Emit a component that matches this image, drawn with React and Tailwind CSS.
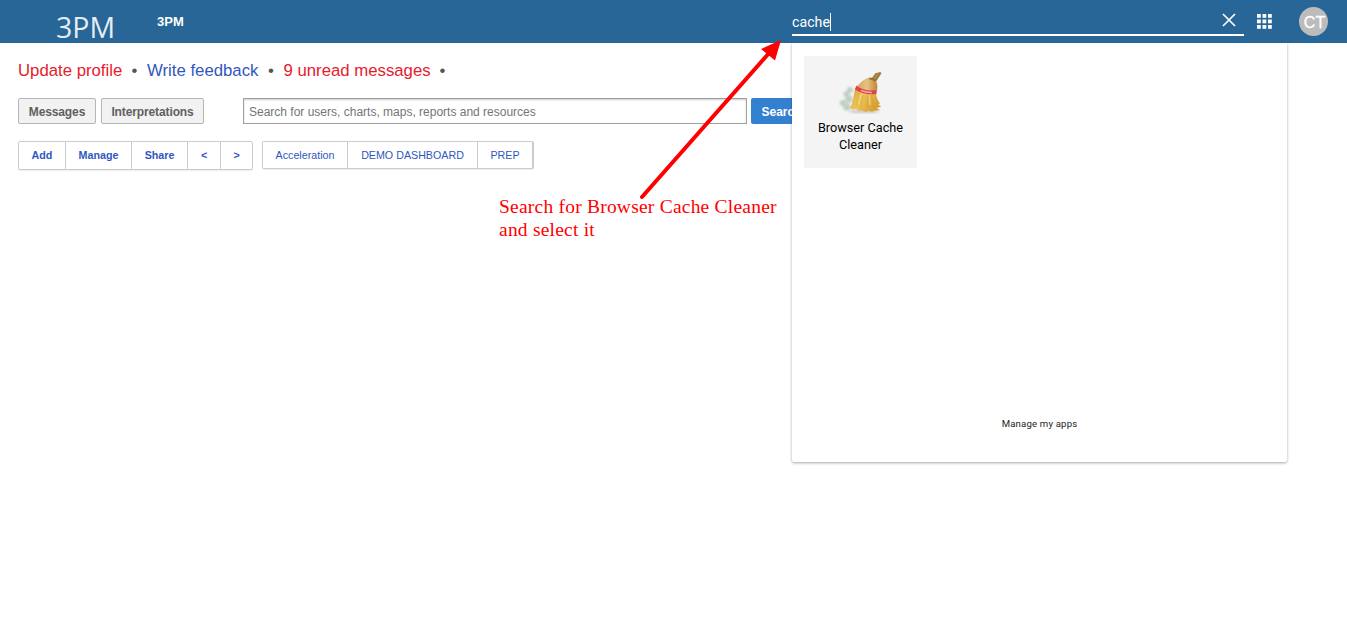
const Broom = () => (
  <svg className="block h-12 w-12" viewBox="0 0 48 48">
    <defs>
      <linearGradient id="straw" x1="0" y1="0" x2="1" y2="0.4">
        <stop offset="0" stopColor="#d09a28" />
        <stop offset="0.4" stopColor="#eec65a" />
        <stop offset="1" stopColor="#d69f2f" />
      </linearGradient>
      <linearGradient id="cap" x1="0" y1="0" x2="1" y2="0">
        <stop offset="0" stopColor="#dba64c" />
        <stop offset="0.5" stopColor="#e6c184" />
        <stop offset="1" stopColor="#bd8934" />
      </linearGradient>
      <filter id="soft" x="-20%" y="-20%" width="140%" height="140%">
        <feGaussianBlur stdDeviation="0.9" />
      </filter>
    </defs>
    <ellipse cx="27" cy="43.500" rx="15" ry="1.6" fill="#aaa" opacity="0.6" filter="url(#soft)" />
    <g fill="#b4c6b8" opacity="0.8" filter="url(#soft)">
      <circle cx="13" cy="22" r="3" />
      <circle cx="9.500" cy="26" r="3" />
      <circle cx="12" cy="31" r="3.8" />
      <circle cx="6" cy="35" r="3.2" />
      <circle cx="10" cy="39" r="3.8" />
    </g>
    <path d="M33.500 12.500L38.500 5.500L43.500 4.300L44 5.500L38.500 14Z" fill="#9b7a34" stroke="#7d5e24" strokeWidth="0.4" />
    <path d="M36 12L41.500 5.500" stroke="#cbb172" strokeWidth="0.8" />
    <path d="M20.500 18.500C23 15 27 11.500 32 10L38.500 12.500C40.500 16 40.300 19 39.800 22.500L29 24L19.500 20Z" fill="url(#cap)" stroke="#c18b32" strokeWidth="0.4" />
    <path d="M32.500 10.500C34.500 10.500 37 11.500 38 13" stroke="#96702b" strokeWidth="1.800" fill="none" />
    <path d="M18 21.500C17 28 16 35 13.500 40C16 42 17.500 41.500 19 40.500C20.500 42.500 23 43 25 42C27.500 44 30 43.500 32 42.500C34 44 36 43.500 37.500 42.500L42.500 42L39.500 40L44 38.500L41 36.500L42.800 35.500C39.500 31 38.800 27 39.200 24Z" fill="url(#straw)" stroke="#d2a246" strokeWidth="0.3" />
    <path d="M22 25C21 31 20 36 18.500 39.500M26 27L23.500 39M30.500 27L30 40M34.500 27L36 39" stroke="#c18b29" strokeWidth="0.7" fill="none" opacity="0.5" />
    <path d="M24 26L21.500 36M32.500 27L33 37" stroke="#f5d983" strokeWidth="1.200" fill="none" opacity="0.8" />
    <path d="M19.500 17.500C25 22 32 23.300 39.800 22L39.300 26C31 27 23.500 25.300 17.800 21.200Z" fill="#dc4352" />
    <path d="M24 22.500C27.500 24 30.500 24.600 35 24.500" stroke="#f6a5ab" strokeWidth="1.500" fill="none" />
  </svg>
);

const Bullet = () => <span className="w-[25px] text-center text-[#555]">•</span>;

const dots = [1, 6.5, 12];

export default function App() {
  return (
    <div className="relative h-[643px] w-[1347px] overflow-hidden bg-white font-['Liberation_Sans',Arial,sans-serif]">
      <header className="flex h-[43px] bg-[#276696] text-white">
        <div className="w-[157px] shrink-0 pt-[7px] pl-[56px] font-['Open_Sans',sans-serif] text-[28.5px] leading-[40px] font-normal text-[#e4edf4]">3PM</div>
        <div className="w-[635px] shrink-0 pt-[12px] text-[13px] leading-5 font-bold">3PM</div>
        <div className="flex h-9 w-[452px] shrink-0 border-b-2 border-white">
          <div className="mt-[13px] h-[18px] border-r border-white font-['Roboto',sans-serif] text-[14.2px] leading-[19px]">cache</div>
          <svg className="mt-3 mr-[7.5px] ml-auto h-4 w-4" viewBox="0 0 16 16" stroke="#fff" strokeWidth="1.700">
            <path d="M2 2L14 14M14 2L2 14" />
          </svg>
        </div>
        <svg className="mt-[13px] ml-[12px] h-[17px] w-[17px]" viewBox="0 0 17 17" fill="#fff">
          {dots.flatMap((y) => dots.map((x) => <rect key={`${x}-${y}`} x={x} y={y} width="3.8" height="3.8" />))}
        </svg>
        <div className="mt-[7px] ml-[26px] flex h-[29px] w-[29px] items-center justify-center rounded-full bg-[#bcbcbc] pt-[2px] pl-[2px] text-[16px] leading-none [-webkit-text-stroke:0.3px_white]">CT</div>
      </header>

      <main className="pt-[18px] pl-[18px]">
        <div className="flex h-5 text-[16.75px] leading-5 whitespace-nowrap">
          <span className="w-[104px] text-[#e5202c]">Update profile</span>
          <Bullet />
          <span className="w-[111.5px] text-[#3057c0]">Write feedback</span>
          <Bullet />
          <span className="w-[146.5px] text-[#e5202c]">9 unread messages</span>
          <Bullet />
        </div>

        <div className="mt-[17px] flex h-[26px] text-[12px] whitespace-nowrap">
          <div className="mr-[5px] flex w-[78px] items-center justify-center rounded-[2px] border border-[#b5b5b5] bg-[#f2f2f2] pt-[2px] font-bold tracking-[-0.12px] text-[#606060]">Messages</div>
          <div className="mr-[39px] flex w-[103px] items-center justify-center rounded-[2px] border border-[#b5b5b5] bg-[#f2f2f2] pt-[2px] font-bold tracking-[-0.12px] text-[#606060]">Interpretations</div>
          <div className="mr-1 flex w-[504px] items-center border border-[#a0a0a0] pt-[2px] pl-[5px] text-[#757575] shadow-[inset_0_1px_2px_#ccc]">Search for users, charts, maps, reports and resources</div>
          <div className="flex w-[61px] items-center justify-center rounded-[2px] bg-[#3480d0] pt-[2px] font-bold text-white">Search</div>
        </div>

        <div className="mt-[17px] flex h-[29px] items-start text-[10.7px] whitespace-nowrap text-[#3057c0]">
          <div className="mr-[9px] flex h-[29px] w-[235px] divide-x divide-[#ccc] rounded-[2px] border border-[#ccc] font-bold shadow-[0_1px_1px_#eee]">
            <span className="flex w-[47px] items-center justify-center">Add</span>
            <span className="flex w-[66px] items-center justify-center">Manage</span>
            <span className="flex w-[56px] items-center justify-center">Share</span>
            <span className="flex w-[33px] items-center justify-center">&lt;</span>
            <span className="flex w-[31px] items-center justify-center">&gt;</span>
          </div>
          <div className="flex h-[28px] w-[272px] divide-x divide-[#ccc] rounded-[2px] border border-r-2 border-[#ccc] shadow-[0_1px_1px_#eee]">
            <span className="flex w-[85px] items-center justify-center">Acceleration</span>
            <span className="flex w-[130px] items-center justify-center">DEMO DASHBOARD</span>
            <span className="flex w-[54px] items-center justify-center">PREP</span>
          </div>
        </div>
      </main>

      <section className="absolute top-[43px] left-[792px] flex h-[419px] w-[495px] flex-col rounded-b-[2px] bg-white font-['Roboto',sans-serif] shadow-[0_1px_3px_rgba(0,0,0,0.35)] [clip-path:inset(0_-6px_-6px_-6px)]">
        <div className="mt-[13px] ml-3 flex h-[112px] w-[113px] flex-col items-center bg-[#f4f4f4] pt-3">
          <Broom />
          <div className="mt-[3px] text-center text-[12.7px] leading-[17px] text-black">
            Browser Cache
            <br />
            Cleaner
          </div>
        </div>
        <div className="mt-auto mb-8 text-center text-[9.6px] leading-[12px] tracking-[0.17px] text-[#222]">Manage my apps</div>
      </section>

      <svg className="absolute top-[36px] left-[636px] h-[168px] w-[150px]" viewBox="636 36 150 168">
        <path d="M642 197L770 52" stroke="#f00" strokeWidth="4" strokeLinecap="round" />
        <path d="M781 40L775 60.500L761 49Z" fill="#f00" />
      </svg>
      <p className="absolute top-[195px] left-[499px] font-['Liberation_Serif',serif] text-[19.5px] leading-[23px] tracking-[0.22px] whitespace-nowrap text-[#f00]">
        Search for Browser Cache Cleaner
        <br />
        and select it
      </p>
    </div>
  );
}
